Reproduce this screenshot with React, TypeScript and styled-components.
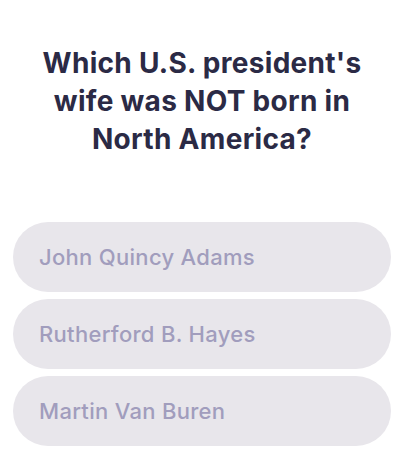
import styled, { createGlobalStyle } from 'styled-components'

const GlobalStyle = createGlobalStyle`
  html, body {
    margin: 0;
    padding: 0;
    background: #ffffff;
  }
  body {
    font-family: Inter, 'Noto Sans', sans-serif;
  }
`

const Screen = styled.div`
  width: 400px;
  height: 456px;
  box-sizing: border-box;
  padding: 44px 9px 0 13px;
  display: flex;
  flex-direction: column;
  overflow: hidden;
`

const Question = styled.h1`
  margin: 0 0 64px;
  text-align: center;
  font-size: 28px;
  line-height: 38px;
  font-weight: 700;
  color: #2b2a45;
  letter-spacing: 0.3px;
`

const Answers = styled.div`
  display: flex;
  flex-direction: column;
  gap: 7px;
`

const Answer = styled.button`
  height: 70px;
  border: none;
  border-radius: 35px;
  background: #e8e6eb;
  padding: 0 0 0 26px;
  text-align: left;
  font-family: Inter, 'Noto Sans', sans-serif;
  font-size: 22px;
  font-weight: 500;
  color: #a19dbd;
  letter-spacing: 0.3px;
  cursor: pointer;
`

const options = ['John Quincy Adams', 'Rutherford B. Hayes', 'Martin Van Buren']

export default function App() {
  return (
    <>
      <GlobalStyle />
      <Screen>
        <Question>
          Which U.S. president's
          <br />
          wife was NOT born in
          <br />
          North America?
        </Question>
        <Answers>
          {options.map(o => (
            <Answer key={o}>{o}</Answer>
          ))}
        </Answers>
      </Screen>
    </>
  )
}
